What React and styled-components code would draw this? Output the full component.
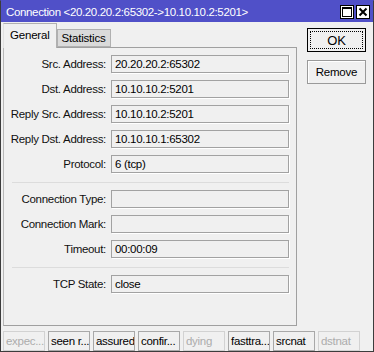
import React from 'react';
import styled, { createGlobalStyle } from 'styled-components';

const Global = createGlobalStyle`
  html, body { margin: 0; padding: 0; background: #f0f0f0; }
  body { font-family: "Liberation Sans", Arial, sans-serif; }
`;

const Window = styled.div`
  width: 374px;
  height: 352px;
  box-sizing: border-box;
  border: 1px solid #3c3c3c;
  border-top-color: #5050c8;
  background: #f0f0f0;
  display: flex;
  flex-direction: column;
  font-family: "Liberation Sans", Arial, sans-serif;
  font-size: 11px;
  color: #000;
`;

const TitleBar = styled.div`
  height: 21px;
  flex: none;
  background: #5050c8;
  color: #fff;
  display: flex;
  align-items: center;
  justify-content: space-between;
  padding: 0 3px 0 5px;
  font-size: 11.5px;
  letter-spacing: -0.35px;
`;

const TitleButtons = styled.div`
  display: flex;
  gap: 2px;
  margin-top: 1px;
`;

const TitleButton = styled.div`
  width: 14px;
  height: 14px;
  box-sizing: border-box;
  background: #fff;
  border: 1px solid #000;
  display: flex;
  align-items: center;
  justify-content: center;
`;

const Body = styled.div`
  flex: 1;
  display: flex;
  min-height: 0;
`;

const LeftCol = styled.div`
  width: 294px;
  margin-left: 2px;
  display: flex;
  flex-direction: column;
`;

const Tabs = styled.div`
  height: 25px;
  display: flex;
  align-items: flex-end;
  position: relative;
  z-index: 1;
`;

const Tab = styled.div`
  box-sizing: border-box;
  height: ${p => (p.$active ? 25 : 18)}px;
  margin-bottom: ${p => (p.$active ? -1 : 0)}px;
  padding: ${p => (p.$active ? '5px 6px 0 6px' : '2px 4px 0 4px')};
  background: ${p => (p.$active ? '#f0f0f0' : '#dadada')};
  border: 1px solid #b0b0b0;
  border-bottom: ${p => (p.$active ? 'none' : '1px solid #b0b0b0')};
  border-left-color: ${p => (p.$active ? '#e0e0e0' : '#b0b0b0')};
  font-size: 11.5px;
  letter-spacing: -0.2px;
`;

const Panel = styled.div`
  height: 279px;
  box-sizing: border-box;
  border: 1px solid #a0a0a0;
  border-left-color: #b8b8b8;
  display: flex;
  flex-direction: column;
  gap: 7px;
  padding-top: 7px;
`;

const Row = styled.div`
  display: grid;
  grid-template-columns: 102px 178px;
  column-gap: 5px;
  height: 18px;
  align-items: center;
`;

const Label = styled.div`
  text-align: right;
  white-space: nowrap;
  color: #111;
  font-size: 11.5px;
  letter-spacing: -0.3px;
`;

const Field = styled.div`
  box-sizing: border-box;
  height: 18px;
  border: 1px solid #a2a2a2;
  box-shadow: 1px 1px 0 #fff;
  padding-left: 3px;
  line-height: 16px;
  font-size: 11.5px;
  letter-spacing: -0.3px;
  white-space: nowrap;
  overflow: hidden;
`;

const Separator = styled.div`
  height: 1px;
  margin: 2px 0 0 8px;
  width: 277px;
  background: #dcdcdc;
`;

const RightCol = styled.div`
  flex: 1;
  padding: 6px 0 0 10px;
  display: flex;
  flex-direction: column;
  gap: 8px;
`;

const Button = styled.div`
  width: 59px;
  height: 24px;
  box-sizing: border-box;
  border: 1px solid ${p => (p.$default ? '#000' : '#9a9a9a')};
  box-shadow: ${p => (p.$default ? 'none' : 'inset 1px 1px 0 #fff')};
  background: #f0f0f0;
  display: flex;
  align-items: center;
  justify-content: center;
  padding: 2px;
  font-size: ${p => (p.$default ? 13 : 11.5)}px;
  letter-spacing: -0.2px;
`;

const FocusRing = styled.div`
  width: 100%;
  height: 100%;
  box-sizing: border-box;
  border: 1px dotted #000;
  display: flex;
  align-items: center;
  justify-content: center;
`;

const StatusBar = styled.div`
  display: flex;
  gap: 3px;
  padding-left: 2px;
  margin-top: 2px;
`;

const StatusItem = styled.div`
  width: 42px;
  height: 20px;
  box-sizing: border-box;
  border: 1px solid ${p => (p.$off ? '#d2d2d2' : '#a8a8a8')};
  color: ${p => (p.$off ? '#acacac' : '#000')};
  padding-left: 2px;
  line-height: 18px;
  font-size: 11.5px;
  letter-spacing: -0.3px;
  white-space: nowrap;
  overflow: hidden;
`;

const groups = [
  [
    ['Src. Address:', '20.20.20.2:65302'],
    ['Dst. Address:', '10.10.10.2:5201'],
    ['Reply Src. Address:', '10.10.10.2:5201'],
    ['Reply Dst. Address:', '10.10.10.1:65302'],
    ['Protocol:', '6 (tcp)'],
  ],
  [
    ['Connection Type:', ''],
    ['Connection Mark:', ''],
    ['Timeout:', '00:00:09'],
  ],
  [['TCP State:', 'close']],
];

const flags = [
  ['expec...', true],
  ['seen r...', false],
  ['assured', false],
  ['confir...', false],
  ['dying', true],
  ['fasttra...', false],
  ['srcnat', false],
  ['dstnat', true],
];

export default function App() {
  return (
    <>
      <Global />
      <Window>
        <TitleBar>
          <span>Connection &lt;20.20.20.2:65302-&gt;10.10.10.2:5201&gt;</span>
          <TitleButtons>
            <TitleButton>
              <svg width="10" height="10" viewBox="0 0 10 10">
                <rect x="0.5" y="0.5" width="9" height="9" fill="none" stroke="#000" />
                <rect x="0" y="0" width="10" height="2" fill="#000" />
              </svg>
            </TitleButton>
            <TitleButton>
              <svg width="10" height="10" viewBox="0 0 10 10">
                <path d="M1.5 1.5 L8.5 8.5 M8.5 1.5 L1.5 8.5" stroke="#000" strokeWidth="2" />
              </svg>
            </TitleButton>
          </TitleButtons>
        </TitleBar>
        <Body>
          <LeftCol>
            <Tabs>
              <Tab $active>General</Tab>
              <Tab>Statistics</Tab>
            </Tabs>
            <Panel>
              {groups.map((g, gi) => (
                <React.Fragment key={gi}>
                  {gi > 0 && <Separator />}
                  {g.map(([l, v]) => (
                    <Row key={l}>
                      <Label>{l}</Label>
                      <Field>{v}</Field>
                    </Row>
                  ))}
                </React.Fragment>
              ))}
            </Panel>
          </LeftCol>
          <RightCol>
            <Button $default>
              <FocusRing>OK</FocusRing>
            </Button>
            <Button>Remove</Button>
          </RightCol>
        </Body>
        <StatusBar>
          {flags.map(([t, off]) => (
            <StatusItem key={t} $off={off}>{t}</StatusItem>
          ))}
        </StatusBar>
      </Window>
    </>
  );
}
